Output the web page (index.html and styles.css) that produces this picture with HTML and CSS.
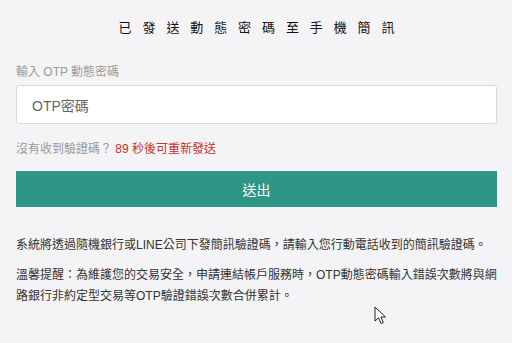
FILE: index.html
```html
<!DOCTYPE html>
<html lang="zh-Hant">
<head>
<meta charset="utf-8">
<link rel="stylesheet" href="styles.css">
</head>
<body>
<div class="page">
  <h1 class="title">已發送動態密碼至手機簡訊</h1>
  <div class="label">輸入 OTP 動態密碼</div>
  <div class="input"><span class="placeholder">OTP密碼</span></div>
  <div class="resend">沒有收到驗證碼？ <span class="count">89 秒後可重新發送</span></div>
  <button class="submit">送出</button>
  <p class="note">系統將透過隨機銀行或LINE公司下發簡訊驗證碼，請輸入您行動電話收到的簡訊驗證碼。</p>
  <p class="note note2">溫馨提醒：為維護您的交易安全，申請連結帳戶服務時，OTP動態密碼輸入錯誤次數將與網路銀行非約定型交易等OTP驗證錯誤次數合併累計。</p>
</div>
<svg class="cursor" width="14" height="20" viewBox="0 0 14 20"><path d="M1 1 L1 15 L4.5 11.8 L7 17.5 L9.3 16.5 L6.9 11 L11.5 11 Z" fill="#fff" stroke="#222" stroke-width="1" stroke-linejoin="round"/></svg>
</body>
</html>
```
FILE: styles.css
```css
html, body {
  margin: 0;
  padding: 0;
  background: #f4f4f6;
}
body {
  font-family: "Liberation Sans", Arial, "Noto Sans CJK TC", sans-serif;
  width: 512px;
  height: 343px;
  overflow: hidden;
  position: relative;
}
.page {
  padding: 18px 15px 0 16px;
  display: flex;
  flex-direction: column;
}
.title {
  margin: 0;
  font-size: 13px;
  font-weight: normal;
  color: #111;
  text-align: center;
  letter-spacing: 10.9px;
  padding-left: 11px;
  line-height: 20px;
}
.label {
  margin-top: 26px;
  font-size: 12px;
  color: #9a9a9a;
  line-height: 16px;
}
.input {
  margin-top: 5px;
  height: 37px;
  background: #fff;
  border: 1px solid #d8d8d8;
  border-radius: 3px;
  display: flex;
  align-items: center;
  padding-left: 15px;
}
.placeholder {
  font-size: 14px;
  color: #666;
}
.resend {
  margin-top: 17px;
  font-size: 12px;
  color: #999;
  line-height: 16px;
}
.count {
  color: #c4322f;
}
.submit {
  margin-top: 14px;
  height: 36px;
  border: none;
  border-radius: 0;
  background: #2e9687;
  color: #fff;
  font-family: inherit;
  font-size: 14px;
  padding: 0;
}
.note {
  margin: 28px 0 0;
  font-size: 12px;
  color: #333;
  line-height: 21px;
}
.note2 {
  margin-top: 9px;
}
.cursor {
  position: absolute;
  left: 374px;
  top: 306px;
}
```
